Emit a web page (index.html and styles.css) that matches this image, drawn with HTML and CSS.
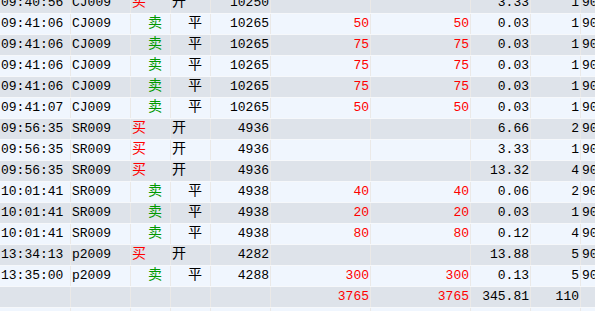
FILE: index.html
```html
<!DOCTYPE html>
<html>
<head>
<meta charset="utf-8">
<link rel="stylesheet" href="styles.css">
</head>
<body>
<div class="viewport">
  <div class="grid">
    <div class="row odd"><div class="c c1">09:40:56</div><div class="c c2">CJ009</div><div class="c c3 buy">买</div><div class="c c4">开</div><div class="c c5 num">10250</div><div class="c c6 num red"></div><div class="c c7 num red"></div><div class="c c8 num">3.33</div><div class="c c9 num">1</div><div class="c c10">900</div></div>
    <div class="row even"><div class="c c1">09:41:06</div><div class="c c2">CJ009</div><div class="c c3 sell">卖</div><div class="c c4 ind">平</div><div class="c c5 num">10265</div><div class="c c6 num red">50</div><div class="c c7 num red">50</div><div class="c c8 num">0.03</div><div class="c c9 num">1</div><div class="c c10">900</div></div>
    <div class="row odd"><div class="c c1">09:41:06</div><div class="c c2">CJ009</div><div class="c c3 sell">卖</div><div class="c c4 ind">平</div><div class="c c5 num">10265</div><div class="c c6 num red">75</div><div class="c c7 num red">75</div><div class="c c8 num">0.03</div><div class="c c9 num">1</div><div class="c c10">900</div></div>
    <div class="row even"><div class="c c1">09:41:06</div><div class="c c2">CJ009</div><div class="c c3 sell">卖</div><div class="c c4 ind">平</div><div class="c c5 num">10265</div><div class="c c6 num red">75</div><div class="c c7 num red">75</div><div class="c c8 num">0.03</div><div class="c c9 num">1</div><div class="c c10">900</div></div>
    <div class="row odd"><div class="c c1">09:41:06</div><div class="c c2">CJ009</div><div class="c c3 sell">卖</div><div class="c c4 ind">平</div><div class="c c5 num">10265</div><div class="c c6 num red">75</div><div class="c c7 num red">75</div><div class="c c8 num">0.03</div><div class="c c9 num">1</div><div class="c c10">900</div></div>
    <div class="row even"><div class="c c1">09:41:07</div><div class="c c2">CJ009</div><div class="c c3 sell">卖</div><div class="c c4 ind">平</div><div class="c c5 num">10265</div><div class="c c6 num red">50</div><div class="c c7 num red">50</div><div class="c c8 num">0.03</div><div class="c c9 num">1</div><div class="c c10">900</div></div>
    <div class="row odd"><div class="c c1">09:56:35</div><div class="c c2">SR009</div><div class="c c3 buy">买</div><div class="c c4">开</div><div class="c c5 num">4936</div><div class="c c6 num red"></div><div class="c c7 num red"></div><div class="c c8 num">6.66</div><div class="c c9 num">2</div><div class="c c10">900</div></div>
    <div class="row even"><div class="c c1">09:56:35</div><div class="c c2">SR009</div><div class="c c3 buy">买</div><div class="c c4">开</div><div class="c c5 num">4936</div><div class="c c6 num red"></div><div class="c c7 num red"></div><div class="c c8 num">3.33</div><div class="c c9 num">1</div><div class="c c10">900</div></div>
    <div class="row odd"><div class="c c1">09:56:35</div><div class="c c2">SR009</div><div class="c c3 buy">买</div><div class="c c4">开</div><div class="c c5 num">4936</div><div class="c c6 num red"></div><div class="c c7 num red"></div><div class="c c8 num">13.32</div><div class="c c9 num">4</div><div class="c c10">900</div></div>
    <div class="row even"><div class="c c1">10:01:41</div><div class="c c2">SR009</div><div class="c c3 sell">卖</div><div class="c c4 ind">平</div><div class="c c5 num">4938</div><div class="c c6 num red">40</div><div class="c c7 num red">40</div><div class="c c8 num">0.06</div><div class="c c9 num">2</div><div class="c c10">900</div></div>
    <div class="row odd"><div class="c c1">10:01:41</div><div class="c c2">SR009</div><div class="c c3 sell">卖</div><div class="c c4 ind">平</div><div class="c c5 num">4938</div><div class="c c6 num red">20</div><div class="c c7 num red">20</div><div class="c c8 num">0.03</div><div class="c c9 num">1</div><div class="c c10">900</div></div>
    <div class="row even"><div class="c c1">10:01:41</div><div class="c c2">SR009</div><div class="c c3 sell">卖</div><div class="c c4 ind">平</div><div class="c c5 num">4938</div><div class="c c6 num red">80</div><div class="c c7 num red">80</div><div class="c c8 num">0.12</div><div class="c c9 num">4</div><div class="c c10">900</div></div>
    <div class="row odd"><div class="c c1">13:34:13</div><div class="c c2">p2009</div><div class="c c3 buy">买</div><div class="c c4">开</div><div class="c c5 num">4282</div><div class="c c6 num red"></div><div class="c c7 num red"></div><div class="c c8 num">13.88</div><div class="c c9 num">5</div><div class="c c10">900</div></div>
    <div class="row even"><div class="c c1">13:35:00</div><div class="c c2">p2009</div><div class="c c3 sell">卖</div><div class="c c4 ind">平</div><div class="c c5 num">4288</div><div class="c c6 num red">300</div><div class="c c7 num red">300</div><div class="c c8 num">0.13</div><div class="c c9 num">5</div><div class="c c10">900</div></div>
    <div class="row odd"><div class="c c1"></div><div class="c c2"></div><div class="c c3"></div><div class="c c4"></div><div class="c c5 num"></div><div class="c c6 num red">3765</div><div class="c c7 num red">3765</div><div class="c c8 num">345.81</div><div class="c c9 num">110</div><div class="c c10"></div></div>
    <div class="row even"><div class="c c1"></div><div class="c c2"></div><div class="c c3"></div><div class="c c4"></div><div class="c c5"></div><div class="c c6"></div><div class="c c7"></div><div class="c c8"></div><div class="c c9"></div><div class="c c10"></div></div>
  </div>
</div>
</body>
</html>
```
FILE: styles.css
```css
html, body {
  margin: 0;
  padding: 0;
  background: #f0f6fe;
  overflow: hidden;
}
.viewport {
  width: 595px;
  height: 311px;
  overflow: hidden;
}
.grid {
  margin-top: -7px;
  width: 660px;
  font-family: "Liberation Mono", "Noto Sans CJK SC", monospace;
  font-size: 13px;
  color: #000;
}
.row {
  display: grid;
  grid-template-columns: 71px 60px 40px 40px 60px 100px 100px 60px 50px 79px;
  height: 21px;
  box-sizing: border-box;
  border-bottom: 1px solid #f6f8fb;
}
.row.odd { background: #dee3ea; }
.row.even { background: #f0f6fe; }
.c {
  box-sizing: border-box;
  border-right: 1px solid #ebe9e7;
  line-height: 20px;
  white-space: nowrap;
  overflow: hidden;
  padding-left: 1px;
}
.c1 { padding-left: 1px; }
.num { text-align: right; padding-right: 1px; padding-left: 0; }
.c3, .c4 { font-size: 14px; line-height: 19px; }
.buy { color: #ff0000; padding-left: 1px; }
.sell { color: #009900; padding-left: 17px; }
.ind { padding-left: 17px; }
.red { color: #ff0000; }
.c10 { padding-left: 1px; }
```
